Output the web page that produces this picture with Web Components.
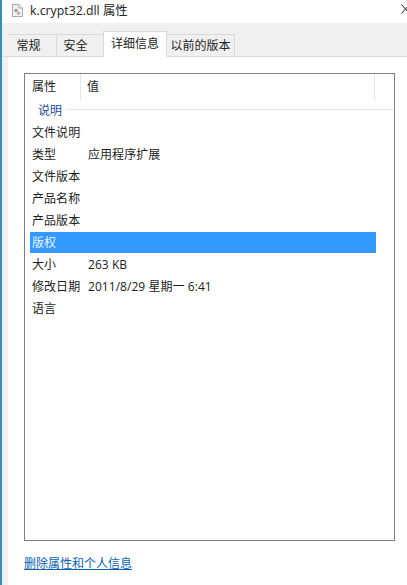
<!DOCTYPE html>
<html lang="zh">
<head>
<meta charset="utf-8">
<title>k.crypt32.dll 属性</title>
<style>
  html, body { margin: 0; padding: 0; background: #fff; }
  body { font: 12px/16px "Open Sans", "Noto Sans CJK SC", sans-serif; color: #1c1c1c; }
</style>
</head>
<body>
<props-dialog>
  <span slot="title">k.crypt32.dll 属性</span>
  <prop-tab slot="tabs" style="--w:49px;--pr:7px">常规</prop-tab>
  <prop-tab slot="tabs" style="--w:47px;--pr:9px">安全</prop-tab>
  <prop-tab slot="tabs" style="--w:64px" active>详细信息</prop-tab>
  <prop-tab slot="tabs" style="--w:68px">以前的版本</prop-tab>
  <detail-list>
    <detail-group>说明</detail-group>
    <detail-row name="文件说明"></detail-row>
    <detail-row name="类型">应用程序扩展</detail-row>
    <detail-row name="文件版本"></detail-row>
    <detail-row name="产品名称"></detail-row>
    <detail-row name="产品版本"></detail-row>
    <detail-row name="版权" selected></detail-row>
    <detail-row name="大小">263 KB</detail-row>
    <detail-row name="修改日期">2011/8/29 星期一 6:41</detail-row>
    <detail-row name="语言"></detail-row>
  </detail-list>
  <a slot="link" href="#">删除属性和个人信息</a>
</props-dialog>

<script>
class PropsDialog extends HTMLElement {
  constructor() {
    super();
    this.attachShadow({ mode: 'open' });
    this.shadowRoot.innerHTML = `
      <style>
        :host {
          display: flex;
          flex-direction: column;
          width: 407px;
          height: 585px;
          box-sizing: border-box;
          border-left: 2px solid #3b8ab8;
          overflow: hidden;
        }
        .title {
          display: flex;
          align-items: center;
          height: 21px;
          padding: 0 0 2px 9px;
          flex: none;
        }
        .title svg { flex: none; margin-right: 6px; }
        .title .text { flex: 1; font-size: 12.3px; color: #222; white-space: nowrap; }
        .title .close { flex: none; margin: -4px -2px 0 0; }
        .tabbar {
          display: flex;
          align-items: flex-end;
          flex: none;
          height: 34px;
          padding-left: 6px;
          background: #f0f0f0;
          box-sizing: border-box;
          border-bottom: 1px solid #d9d9d9;
        }
        .page {
          flex: 1;
          display: flex;
          min-height: 0;
          background: #f0f0f0;
          padding-left: 6px;
        }
        .content {
          flex: 1;
          display: flex;
          flex-direction: column;
          background: #fff;
          padding: 16px 12px 0 16px;
          min-width: 0;
        }
        .linkrow {
          flex: none;
          height: 44px;
          padding-top: 15px;
          box-sizing: border-box;
        }
        ::slotted(a) { color: #0a5fb4; text-decoration: underline; }
      </style>
      <div class="title">
        <svg width="13" height="15" viewBox="0 0 13 15">
          <path d="M1.5 1.5h6.5l3.5 3.5v8.5h-10z" fill="#f2f2f2" stroke="#a8a8a8"/>
          <path d="M8 1.5v3.5h3.5" fill="#fff" stroke="#a8a8a8"/>
          <circle cx="5" cy="7.5" r="1.7" fill="#9a9a9a"/>
          <circle cx="7.6" cy="10.2" r="1.7" fill="#b5b5b5"/>
        </svg>
        <span class="text"><slot name="title"></slot></span>
        <svg class="close" width="8" height="10" viewBox="0 0 8 10">
          <path d="M0.5 0.5l8 9M8.5 0.5l-8 9" fill="none" stroke="#222" stroke-width="1"/>
        </svg>
      </div>
      <div class="tabbar"><slot name="tabs"></slot></div>
      <div class="page">
        <div class="content">
          <slot></slot>
          <div class="linkrow"><slot name="link"></slot></div>
        </div>
      </div>
    `;
  }
}

class PropTab extends HTMLElement {
  constructor() {
    super();
    this.attachShadow({ mode: 'open' });
    this.shadowRoot.innerHTML = `
      <style>
        :host {
          display: flex;
          align-items: center;
          justify-content: center;
          width: var(--w);
          height: 23px;
          box-sizing: border-box;
          padding-right: var(--pr, 0);
          margin-bottom: -1px;
          border: 1px solid #d9d9d9;
          border-left-width: 0;
          background: #f0f0f0;
          color: #222;
          white-space: nowrap;
        }
        :host(:first-child) { border-left-width: 1px; }
        :host([active]) {
          height: 26px;
          background: #fff;
          border-bottom-color: #fff;
          border-left-width: 1px;
          margin-left: -1px;
          padding-bottom: 1px;
        }
      </style>
      <slot></slot>
    `;
  }
}

class DetailList extends HTMLElement {
  constructor() {
    super();
    this.attachShadow({ mode: 'open' });
    this.shadowRoot.innerHTML = `
      <style>
        :host {
          display: block;
          flex: 1;
          min-height: 0;
          box-sizing: border-box;
          border: 1px solid #808080;
          padding: 0 5px;
          overflow: hidden;
        }
        .head {
          display: grid;
          grid-template-columns: 51px 294px;
          height: 26px;
          align-items: center;
        }
        .head span {
          height: 100%;
          display: flex;
          align-items: center;
          padding-left: 2px;
          box-sizing: border-box;
          border-right: 1px solid #e4e4e4;
        }
        .head span + span { padding-left: 6px; }
      </style>
      <div class="head"><span>属性</span><span>值</span></div>
      <slot></slot>
    `;
  }
}

class DetailGroup extends HTMLElement {
  constructor() {
    super();
    this.attachShadow({ mode: 'open' });
    this.shadowRoot.innerHTML = `
      <style>
        :host {
          display: flex;
          align-items: center;
          height: 21px;
          padding-left: 8px;
          margin-right: -7px;
          color: #1a4a9c;
        }
        .rule { flex: 1; height: 1px; background: #e2e6ee; margin: 0 0 2px 4px; }
      </style>
      <slot></slot><div class="rule"></div>
    `;
  }
}

class DetailRow extends HTMLElement {
  constructor() {
    super();
    this.attachShadow({ mode: 'open' });
    this.shadowRoot.innerHTML = `
      <style>
        :host {
          display: grid;
          grid-template-columns: 56px 1fr;
          align-items: center;
          width: 346px;
          height: 22px;
          box-sizing: border-box;
          padding: 1px 0 0 2px;
          white-space: nowrap;
          letter-spacing: 0.05px;
        }
        :host([selected]) {
          background: linear-gradient(#fff 1px, #3399ff 1px, #3399ff 100%);
          color: #eaf4ff;
        }
      </style>
      <span class="name"></span><span><slot></slot></span>
    `;
  }

  connectedCallback() {
    this.shadowRoot.querySelector('.name').textContent = this.getAttribute('name');
  }
}

customElements.define('props-dialog', PropsDialog);
customElements.define('prop-tab', PropTab);
customElements.define('detail-list', DetailList);
customElements.define('detail-group', DetailGroup);
customElements.define('detail-row', DetailRow);
</script>
</body>
</html>
